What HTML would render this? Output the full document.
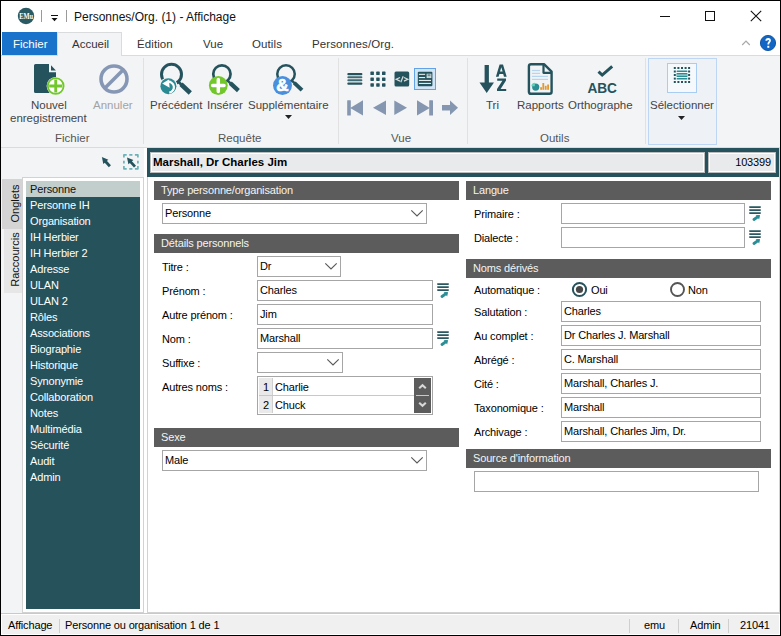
<!DOCTYPE html>
<html><head><meta charset="utf-8">
<style>
html,body{margin:0;padding:0}
body{width:781px;height:636px;position:relative;overflow:hidden;background:#fff;font-family:"Liberation Sans",sans-serif;color:#000}
.a{position:absolute}
.t{position:absolute;white-space:nowrap;font-size:11px;line-height:11px;letter-spacing:-0.15px}
.r{position:absolute;white-space:nowrap;font-size:11.5px;line-height:12px;color:#444}
.hd{position:absolute;background:#5b5c5b;height:19px;width:305px}
.hd span{position:absolute;left:7px;top:4px;color:#f4f4f4;font-size:11px;line-height:11px;white-space:nowrap;letter-spacing:-0.15px}
.in{position:absolute;box-sizing:border-box;border:1px solid #a6a6a6;background:#fff;height:21px}
.in span{position:absolute;left:2px;top:4px;font-size:11px;line-height:11px;white-space:nowrap;letter-spacing:-0.15px}
.lb{position:absolute;white-space:nowrap;font-size:11px;line-height:11px;letter-spacing:-0.15px}
.li{position:absolute;left:30px;color:#fff;font-size:11px;line-height:11px;white-space:nowrap;letter-spacing:-0.15px}
.sep{position:absolute;width:1px;background:#e1e1e1}
</style></head><body>
<!-- window border -->
<div class="a" style="left:0;top:0;width:781px;height:636px;box-sizing:border-box;border:1px solid #000"></div>

<!-- TITLE BAR -->
<svg class="a" style="left:17px;top:7px" width="18" height="18" viewBox="0 0 18 18"><circle cx="9" cy="9" r="8.2" fill="#2a5a63"/><text x="2.3" y="11.6" textLength="13.9" lengthAdjust="spacingAndGlyphs" font-family="Liberation Serif" font-weight="bold" font-size="7.6" fill="#fff">EMu</text></svg>
<div class="a" style="left:41px;top:10px;width:1px;height:12px;background:#9a9a9a"></div>
<svg class="a" style="left:50px;top:13px" width="9" height="9" viewBox="0 0 9 9"><rect x="1" y="2" width="7" height="1" fill="#111"/><path d="M1.5 5 L7.5 5 L4.5 8.2 Z" fill="#111"/></svg>
<div class="a" style="left:66px;top:10px;width:1px;height:12px;background:#9a9a9a"></div>
<div class="a" style="left:74px;top:11px;font-size:12px;line-height:12px;white-space:nowrap;color:#111">Personnes/Org. (1) - Affichage</div>
<div class="a" style="left:660px;top:16px;width:10px;height:1px;background:#111"></div>
<div class="a" style="left:705px;top:11px;width:10px;height:10px;box-sizing:border-box;border:1px solid #111"></div>
<svg class="a" style="left:750px;top:10px" width="12" height="12" viewBox="0 0 12 12"><path d="M0.8 0.8 L11.2 11.2 M11.2 0.8 L0.8 11.2" stroke="#111" stroke-width="1.1"/></svg>

<!-- TAB ROW -->
<div class="a" style="left:1px;top:55px;width:779px;height:1px;background:#dadbdc"></div>
<div class="a" style="left:2px;top:32px;width:55px;height:23px;background:#1a73ca"></div>
<div class="t" style="left:13px;top:39px;color:#fff;font-size:11.5px;letter-spacing:0">Fichier</div>
<div class="a" style="left:57px;top:32px;width:65px;height:24px;box-sizing:border-box;border:1px solid #dadbdc;border-bottom:none;background:#f3f4f6"></div>
<div class="t" style="left:72px;top:39px;color:#333;font-size:11.5px;letter-spacing:0">Accueil</div>
<div class="t" style="left:137px;top:39px;color:#333;font-size:11.5px;letter-spacing:0.1px">Édition</div>
<div class="t" style="left:203px;top:39px;color:#333;font-size:11.5px;letter-spacing:0.1px">Vue</div>
<div class="t" style="left:252px;top:39px;color:#333;font-size:11.5px;letter-spacing:0.1px">Outils</div>
<div class="t" style="left:312px;top:39px;color:#333;font-size:11.5px;letter-spacing:0.1px">Personnes/Org.</div>
<svg class="a" style="left:740px;top:39px" width="12" height="8" viewBox="0 0 12 8"><path d="M2.2 6 L6 2.2 L9.8 6" stroke="#a8a8a8" stroke-width="1.2" fill="none"/></svg>
<svg class="a" style="left:759px;top:34px" width="18" height="18" viewBox="0 0 18 18"><circle cx="9" cy="9" r="7.6" fill="#1267c6" stroke="#0b4f9c" stroke-width="0.9"/><path d="M7.3 6.8 Q7.3 5 9.2 5 Q11 5 11 6.6 Q11 7.6 10.1 8.3 Q9.3 9 9.3 10.6" stroke="#fff" stroke-width="1.8" fill="none"/><rect x="8.3" y="11.8" width="2" height="2" fill="#fff"/></svg>

<!-- RIBBON -->
<div class="a" style="left:1px;top:56px;width:779px;height:91px;background:#f3f4f6"></div>
<div class="a" style="left:1px;top:147px;width:779px;height:1px;background:#dadbdc"></div>
<div class="sep" style="left:143px;top:58px;height:86px"></div>
<div class="sep" style="left:338px;top:58px;height:86px"></div>
<div class="sep" style="left:467px;top:58px;height:86px"></div>
<div class="sep" style="left:645px;top:58px;height:86px"></div>

<!-- Fichier group -->
<svg class="a" style="left:30px;top:60px" width="40" height="40" viewBox="0 0 40 40">
 <path d="M5.5 4 H19 V12.2 H26 V31.4 Q26 32.9 24.5 32.9 H5.5 Q4 32.9 4 31.4 V5.5 Q4 4 5.5 4 Z" fill="#25535d"/>
 <path d="M21 5.3 V10.4 H25.9 Z" fill="#25535d"/>
 <circle cx="25.7" cy="26" r="9.1" fill="#fff"/>
 <circle cx="25.7" cy="26" r="7.9" fill="#fff" stroke="#72c72b" stroke-width="1.9"/>
 <path d="M19.2 26 H32.2 M25.7 19.5 V32.5" stroke="#72c72b" stroke-width="2.8"/>
</svg>
<div class="r" style="left:31px;top:99px">Nouvel</div>
<div class="r" style="left:10px;top:112px">enregistrement</div>
<svg class="a" style="left:97px;top:62px" width="34" height="34" viewBox="0 0 34 34"><circle cx="17" cy="17" r="13" fill="none" stroke="#8597b4" stroke-width="3.6"/><path d="M8 26 L26 8" stroke="#8597b4" stroke-width="3.6"/></svg>
<div class="r" style="left:93px;top:99px;color:#a3a3a3">Annuler</div>
<div class="r" style="left:55px;top:132px;color:#555">Fichier</div>

<!-- Requête group -->
<svg class="a" style="left:150px;top:58px" width="50" height="42" viewBox="0 0 50 42">
 <circle cx="21.5" cy="16.3" r="10" fill="none" stroke="#25535d" stroke-width="3"/>
 <path d="M27.6 23 L31.5 26.8" stroke="#25535d" stroke-width="2.8"/>
 <path d="M31 26.3 L40.3 35" stroke="#25535d" stroke-width="4.6"/>
 <circle cx="18.4" cy="28.2" r="9" fill="#f3f4f6"/>
 <circle cx="18.4" cy="28.2" r="8" fill="#2a8a94"/>
 <path d="M17.6 23.8 A4.9 4.9 0 0 1 19.3 34.6" stroke="#fff" stroke-width="2.2" fill="none"/>
 <path d="M12.2 25.5 L19 21.6 L19.6 29.8 Z" fill="#fff"/>
</svg>
<div class="r" style="left:150px;top:99px">Précédent</div>
<svg class="a" style="left:200px;top:58px" width="45" height="42" viewBox="0 0 45 42">
 <circle cx="21.9" cy="16" r="8.65" fill="none" stroke="#25535d" stroke-width="2.7"/>
 <path d="M27.3 22.3 L30.8 25.6" stroke="#25535d" stroke-width="2.5"/>
 <path d="M30.3 25.1 L38.4 32.6" stroke="#25535d" stroke-width="4.2"/>
 <circle cx="18.3" cy="27.5" r="9.4" fill="#72c72b"/>
 <path d="M12.6 27.5 H24 M18.3 21.4 V33.6" stroke="#fff" stroke-width="3.5" stroke-linecap="round"/>
</svg>
<div class="r" style="left:207px;top:99px">Insérer</div>
<svg class="a" style="left:265px;top:58px" width="45" height="42" viewBox="0 0 45 42">
 <circle cx="21" cy="16" r="8.75" fill="none" stroke="#25535d" stroke-width="2.5"/>
 <path d="M26.5 22.3 L29.8 25.4" stroke="#25535d" stroke-width="2.4"/>
 <path d="M29.3 24.9 L37 32.1" stroke="#25535d" stroke-width="4"/>
 <circle cx="17.5" cy="27.5" r="9.5" fill="#4a8fdc"/>
 <text x="17.3" y="33.4" text-anchor="middle" font-family="Liberation Sans" font-weight="bold" font-size="17" fill="#fff" stroke="#fff" stroke-width="0.7">&amp;</text>
</svg>
<div class="r" style="left:248px;top:99px">Supplémentaire</div>
<svg class="a" style="left:285px;top:115px" width="7" height="5" viewBox="0 0 7 5"><path d="M0 0 H7 L3.5 4 Z" fill="#222"/></svg>
<div class="r" style="left:218px;top:132px;color:#555">Requête</div>

<!-- Vue group -->
<svg class="a" style="left:345px;top:68px" width="120" height="52" viewBox="0 0 120 52">
 <g fill="#25535d">
  <rect x="2.3" y="5" width="15.1" height="2.2" rx="1"/><rect x="2.3" y="8.3" width="15.1" height="2" rx="1" fill="#3d6a73"/><rect x="2.3" y="11.2" width="15.1" height="2" rx="1" fill="#3d6a73"/><rect x="2.3" y="14.5" width="15.1" height="2.3" rx="1"/>
  <rect x="25.4" y="3.6" width="3.5" height="3.5" rx="0.6"/><rect x="31.2" y="3.6" width="3.5" height="3.5" rx="0.6"/><rect x="37" y="3.6" width="3.5" height="3.5" rx="0.6"/><rect x="25.4" y="9.4" width="3.5" height="3.5" rx="0.6"/><rect x="31.2" y="9.4" width="3.5" height="3.5" rx="0.6"/><rect x="37" y="9.4" width="3.5" height="3.5" rx="0.6"/><rect x="25.4" y="15.2" width="3.5" height="3.5" rx="0.6"/><rect x="31.2" y="15.2" width="3.5" height="3.5" rx="0.6"/><rect x="37" y="15.2" width="3.5" height="3.5" rx="0.6"/>
  <rect x="49.5" y="3.4" width="14.7" height="15.1" rx="1.5"/>
 </g>
 <path d="M55 9.5 L51.2 11.3 L55 13.1 M58.2 8.2 L55.8 14.3 M59 9.5 L62.8 11.3 L59 13.1" stroke="#d5dcdc" stroke-width="1.25" fill="none"/>
 <rect x="69.5" y="0.5" width="21" height="21" fill="#d2e4f8" stroke="#62a2e6" stroke-width="1"/>
 <rect x="72.8" y="3.8" width="14.6" height="14.4" rx="1" fill="#25535d"/>
 <g fill="#e4eaec"><rect x="73.9" y="5.8" width="6.2" height="1.1"/><rect x="73.9" y="9" width="6.2" height="1.1"/><rect x="73.9" y="11.9" width="12.1" height="1.1"/><rect x="73.9" y="14.9" width="12.1" height="1.1"/></g>
 <rect x="82" y="6.1" width="4" height="3.6" fill="#b9c8cb" stroke="#dfe6e8" stroke-width="0.7"/><rect x="82.6" y="6.6" width="2.8" height="0.9" fill="#25535d"/>
 <g fill="#8596b0">
  <rect x="2.2" y="32.2" width="3.6" height="15.4" rx="0.5"/><path d="M5.2 39.9 L18 32.2 V47.6 Z"/>
  <path d="M28 39.8 L41 32.5 V47 Z"/>
  <path d="M49.3 32.5 L62 39.8 L49.3 47 Z"/>
  <path d="M72 32.2 L84.8 39.9 L72 47.6 Z"/><rect x="84.2" y="32.2" width="3.8" height="15.4" rx="0.5"/>
  <path d="M97 37 H105 V32.5 L113 39.8 L105 47 V42.5 H97 Z"/>
 </g>
</svg>
<div class="r" style="left:391px;top:132px;color:#555">Vue</div>

<!-- Outils group -->
<svg class="a" style="left:475px;top:60px" width="40" height="38" viewBox="0 0 40 38">
 <path d="M9.6 5 H13.9 V22.4 H19 L11.7 33 L4.5 22.4 H9.6 Z" fill="#25535d"/>
 <path fill-rule="evenodd" d="M20.9 16.7 L24.6 4.5 H28 L31.7 16.7 H29 L28.2 13.9 H24.4 L23.6 16.7 Z M25 11.6 H27.6 L26.3 7.2 Z" fill="#25535d"/>
 <path d="M22.2 18.5 H31 V20.6 L25.6 28.9 H31.2 V31.1 H22 V29 L27.4 20.7 H22.2 Z" fill="#25535d"/>
</svg>
<div class="r" style="left:486px;top:99px">Tri</div>
<svg class="a" style="left:525px;top:60px" width="32" height="38" viewBox="0 0 32 38">
 <path d="M6 4.2 H19 L26.6 11.6 V31.8 Q26.6 33.8 24.6 33.8 H5.9 Q3.9 33.8 3.9 31.8 V6.2 Q3.9 4.2 6 4.2 Z" fill="#f1f3f5" stroke="#25535d" stroke-width="2.4" stroke-linejoin="round"/>
 <path d="M18.5 4.5 V12.8 H26.3" fill="none" stroke="#25535d" stroke-width="2.2" stroke-linejoin="round"/>
 <g fill="#b5d6ee"><rect x="6.9" y="9.9" width="8.1" height="1.2"/><rect x="6.9" y="12.8" width="8.1" height="1.2"/><rect x="6.9" y="15.8" width="16.1" height="1.2"/><rect x="6.9" y="18.8" width="16.1" height="1.2"/></g>
 <circle cx="10.7" cy="27.1" r="3.6" fill="#2a8e94"/>
 <path d="M9.9 26.2 V22.7 A3.5 3.5 0 0 0 6.4 26.2 Z" fill="#62d2b6"/>
 <g fill="#e3992e"><rect x="15.2" y="27.2" width="1.8" height="2.6"/><rect x="17.4" y="23" width="1.8" height="6.8"/><rect x="19.8" y="25.8" width="1.8" height="4"/><rect x="22.2" y="24.5" width="1.8" height="5.3"/></g>
</svg>
<div class="r" style="left:517px;top:99px">Rapports</div>
<svg class="a" style="left:585px;top:60px" width="36" height="38" viewBox="0 0 36 38">
 <path d="M13.5 11.6 L17.2 15.1 L27.2 6.4" fill="none" stroke="#25535d" stroke-width="3"/>
 <text x="2.4" y="32.5" textLength="29.6" lengthAdjust="spacingAndGlyphs" font-family="Liberation Sans" font-weight="bold" font-size="14.8" fill="#25535d">ABC</text>
</svg>
<div class="r" style="left:568px;top:99px">Orthographe</div>
<div class="r" style="left:540px;top:132px;color:#555">Outils</div>

<!-- Sélectionner -->
<div class="a" style="left:648px;top:58px;width:69px;height:87px;box-sizing:border-box;border:1px solid #bcd6f3;background:#eef2f7"></div>
<div class="a" style="left:667px;top:63px;width:30px;height:30px;box-sizing:border-box;border:1px solid #a9cdf2;background:#f6f9fc"></div>
<svg class="a" style="left:672px;top:66px" width="20" height="20" viewBox="0 0 20 20">
 <g fill="#25535d"><rect x="1.8" y="1.0" width="2" height="2"/><rect x="1.8" y="15.0" width="2" height="2"/><rect x="5.4" y="1.0" width="2" height="2"/><rect x="5.4" y="15.0" width="2" height="2"/><rect x="9.0" y="1.0" width="2" height="2"/><rect x="9.0" y="15.0" width="2" height="2"/><rect x="12.6" y="1.0" width="2" height="2"/><rect x="12.6" y="15.0" width="2" height="2"/><rect x="16.1" y="1.0" width="2" height="2"/><rect x="16.1" y="15.0" width="2" height="2"/><rect x="1.8" y="4.5" width="2" height="2"/><rect x="16.1" y="4.5" width="2" height="2"/><rect x="1.8" y="8.0" width="2" height="2"/><rect x="16.1" y="8.0" width="2" height="2"/><rect x="1.8" y="11.6" width="2" height="2"/><rect x="16.1" y="11.6" width="2" height="2"/></g>
 <rect x="4.6" y="4.6" width="10.8" height="1.5" rx="0.6" fill="#2a8e94"/>
 <rect x="4.6" y="7" width="10.8" height="4" rx="0.6" fill="#2a8e94"/>
 <rect x="4.8" y="8.2" width="10.4" height="1.7" fill="#8cc4c6"/>
 <rect x="4.6" y="12.1" width="10.8" height="1.4" rx="0.6" fill="#2a8e94"/>
</svg>
<div class="r" style="left:650px;top:99px">Sélectionner</div>
<svg class="a" style="left:678px;top:116px" width="7" height="5" viewBox="0 0 7 5"><path d="M0 0 H7 L3.5 4 Z" fill="#222"/></svg>

<!-- SIDEBAR -->
<div class="a" style="left:1px;top:148px;width:143px;height:465px;background:#f3f4f6"></div>
<svg class="a" style="left:100px;top:155px" width="14" height="14" viewBox="0 0 14 14"><path d="M1.9 2.1 L8.3 4.8 L3.3 9 Z" fill="#25535d"/><path d="M5.3 6.3 L9.9 11.3" stroke="#25535d" stroke-width="2.8"/></svg>
<svg class="a" style="left:122px;top:153px" width="18" height="18" viewBox="0 0 18 18"><path d="M1.9 4.6 V1.9 H4.7 M7.3 1.9 H10.4 M12.9 1.9 H15.9 V4.6 M1.9 7.7 V10.5 M15.9 7.7 V10.5 M1.9 13.1 V15.8 H4.7 M7.3 15.8 H10.4 M12.9 15.8 H15.9 V13.1" fill="none" stroke="#6cb2b8" stroke-width="1.7" stroke-linejoin="round"/><path d="M5 4.4 L11.4 7.1 L6.4 11.3 Z" fill="#25535d"/><path d="M8.4 8.6 L13 13.6" stroke="#25535d" stroke-width="2.8"/></svg>
<div class="a" style="left:22px;top:177px;width:122px;height:436px;box-sizing:border-box;border:1px solid #d2d2d2;background:#fff"></div>
<div class="a" style="left:2px;top:179px;width:20px;height:50px;background:#d4d4d4"></div>
<div class="a" style="left:4px;top:229px;width:18px;height:64px;background:#e6e6e6"></div>
<div class="a" style="left:-10px;top:198px;width:50px;height:11px;transform:rotate(-90deg);font-size:11px;line-height:11px;text-align:center;color:#111">Onglets</div>
<div class="a" style="left:-17px;top:254px;width:64px;height:11px;transform:rotate(-90deg);font-size:11px;line-height:11px;text-align:center;color:#111">Raccourcis</div>
<div class="a" style="left:26px;top:181px;width:114px;height:428px;background:#26525c"></div>
<div class="a" style="left:26px;top:181px;width:114px;height:16px;background:#c2cecb"></div>
<div class="li" style="top:184px;color:#111">Personne</div>
<div class="li" style="top:200px">Personne IH</div>
<div class="li" style="top:216px">Organisation</div>
<div class="li" style="top:232px">IH Herbier</div>
<div class="li" style="top:248px">IH Herbier 2</div>
<div class="li" style="top:264px">Adresse</div>
<div class="li" style="top:280px">ULAN</div>
<div class="li" style="top:296px">ULAN 2</div>
<div class="li" style="top:312px">Rôles</div>
<div class="li" style="top:328px">Associations</div>
<div class="li" style="top:344px">Biographie</div>
<div class="li" style="top:360px">Historique</div>
<div class="li" style="top:376px">Synonymie</div>
<div class="li" style="top:392px">Collaboration</div>
<div class="li" style="top:408px">Notes</div>
<div class="li" style="top:424px">Multimédia</div>
<div class="li" style="top:440px">Sécurité</div>
<div class="li" style="top:456px">Audit</div>
<div class="li" style="top:472px">Admin</div>

<!-- CONTENT -->
<div class="a" style="left:147px;top:148px;width:633px;height:465px;box-sizing:border-box;border:1px solid #d2d2d2;border-top:none;background:#fff"></div>
<div class="a" style="left:147px;top:148px;width:632px;height:29px;background:#25525c"></div>
<div class="a" style="left:150px;top:152px;width:555px;height:21px;box-sizing:border-box;border:1px solid #b9bdbe;box-shadow:inset 0 0 0 1px #fff;background:#e9eaec"></div>
<div class="a" style="left:708px;top:152px;width:68px;height:21px;box-sizing:border-box;border:1px solid #b9bdbe;box-shadow:inset 0 0 0 1px #fff;background:#e9eaec"></div>
<div class="a" style="left:153px;top:156px;font-weight:bold;font-size:11.5px;line-height:12px;white-space:nowrap;color:#000">Marshall, Dr Charles Jim</div>
<div class="t" style="left:735px;top:157px;width:36px;text-align:right">103399</div>

<!-- left column -->
<div class="hd" style="left:154px;top:181px"><span>Type personne/organisation</span></div>
<div class="in" style="left:162px;top:203px;width:265px"><span>Personne</span></div>
<div class="hd" style="left:154px;top:234px"><span>Détails personnels</span></div>
<div class="lb" style="left:162px;top:262px">Titre :</div>
<div class="lb" style="left:162px;top:286px">Prénom :</div>
<div class="lb" style="left:162px;top:310px">Autre prénom :</div>
<div class="lb" style="left:162px;top:334px">Nom :</div>
<div class="lb" style="left:162px;top:358px">Suffixe :</div>
<div class="lb" style="left:162px;top:382px">Autres noms :</div>
<div class="in" style="left:257px;top:256px;width:84px"><span>Dr</span></div>
<div class="in" style="left:257px;top:280px;width:176px"><span>Charles</span></div>
<div class="in" style="left:257px;top:304px;width:176px"><span>Jim</span></div>
<div class="in" style="left:257px;top:328px;width:176px"><span>Marshall</span></div>
<div class="in" style="left:257px;top:352px;width:86px"></div>
<div class="a" style="left:257px;top:376px;width:176px;height:39px;box-sizing:border-box;border:1px solid #a6a6a6;background:#fff"></div>
<div class="a" style="left:259px;top:378px;width:13px;height:35px;background:#e9e9e9;border-right:1px solid #cfcfcf"></div>
<div class="a" style="left:259px;top:395px;width:155px;height:1px;background:#c8c8c8"></div>
<div class="t" style="left:263px;top:382px">1</div>
<div class="t" style="left:275px;top:382px">Charlie</div>
<div class="t" style="left:263px;top:400px">2</div>
<div class="t" style="left:275px;top:400px">Chuck</div>
<div class="a" style="left:414px;top:378px;width:17px;height:35px;background:#5b5c5b"></div>
<div class="a" style="left:416px;top:395px;width:13px;height:1px;background:#c8c8c8"></div>
<svg class="a" style="left:418px;top:381px" width="9" height="30" viewBox="0 0 9 30"><path d="M1.2 7.2 L4.5 4.2 L7.8 7.2" stroke="#d8d8d8" stroke-width="2.1" fill="none"/><path d="M1.2 21.8 L4.5 24.8 L7.8 21.8" stroke="#d8d8d8" stroke-width="2.1" fill="none"/></svg>

<div class="hd" style="left:154px;top:428px"><span>Sexe</span></div>
<div class="in" style="left:162px;top:450px;width:265px"><span>Male</span></div>

<!-- right column -->
<div class="hd" style="left:466px;top:181px"><span>Langue</span></div>
<div class="lb" style="left:474px;top:209px">Primaire :</div>
<div class="lb" style="left:474px;top:233px">Dialecte :</div>
<div class="in" style="left:561px;top:203px;width:184px"></div>
<div class="in" style="left:561px;top:227px;width:184px"></div>
<div class="hd" style="left:466px;top:259px"><span>Noms dérivés</span></div>
<div class="lb" style="left:474px;top:285px">Automatique :</div>
<svg class="a" style="left:571px;top:281px" width="17" height="17" viewBox="0 0 17 17"><circle cx="8.5" cy="8.5" r="6.6" fill="#fff" stroke="#25525c" stroke-width="2"/><circle cx="8.5" cy="8.5" r="3.6" fill="#474747"/></svg>
<div class="t" style="left:591px;top:285px">Oui</div>
<svg class="a" style="left:669px;top:281px" width="17" height="17" viewBox="0 0 17 17"><circle cx="8.5" cy="8.5" r="6.5" fill="#fff" stroke="#555" stroke-width="1.9"/></svg>
<div class="t" style="left:688px;top:285px">Non</div>
<div class="lb" style="left:474px;top:307px">Salutation :</div>
<div class="lb" style="left:474px;top:331px">Au complet :</div>
<div class="lb" style="left:474px;top:355px">Abrégé :</div>
<div class="lb" style="left:474px;top:379px">Cité :</div>
<div class="lb" style="left:474px;top:403px">Taxonomique :</div>
<div class="lb" style="left:474px;top:427px">Archivage :</div>
<div class="in" style="left:561px;top:301px;width:200px"><span>Charles</span></div>
<div class="in" style="left:561px;top:325px;width:200px"><span>Dr Charles J. Marshall</span></div>
<div class="in" style="left:561px;top:349px;width:200px"><span>C. Marshall</span></div>
<div class="in" style="left:561px;top:373px;width:200px"><span>Marshall, Charles J.</span></div>
<div class="in" style="left:561px;top:397px;width:200px"><span>Marshall</span></div>
<div class="in" style="left:561px;top:421px;width:200px"><span>Marshall, Charles Jim, Dr.</span></div>
<div class="hd" style="left:466px;top:449px"><span>Source d'information</span></div>
<div class="in" style="left:474px;top:471px;width:285px"></div>


<!-- chevrons -->
<svg class="a" style="left:406px;top:209px" width="18" height="9" viewBox="0 0 18 9"><path d="M5.3 1.3 L11 7 L16.7 1.3" stroke="#5a5a5a" stroke-width="1.15" fill="none"/></svg>
<svg class="a" style="left:406px;top:456px" width="18" height="9" viewBox="0 0 18 9"><path d="M5.3 1.3 L11 7 L16.7 1.3" stroke="#5a5a5a" stroke-width="1.15" fill="none"/></svg>
<svg class="a" style="left:324px;top:262px" width="15" height="9" viewBox="0 0 15 9"><path d="M1.3 1.3 L7 7 L12.7 1.3" stroke="#5a5a5a" stroke-width="1.15" fill="none"/></svg>
<svg class="a" style="left:326px;top:358px" width="15" height="9" viewBox="0 0 15 9"><path d="M1.3 1.3 L7 7 L12.7 1.3" stroke="#5a5a5a" stroke-width="1.15" fill="none"/></svg>
<!-- list icons -->
<svg class="a" style="left:436px;top:282px" width="14" height="16" viewBox="0 0 14 16"><g fill="#2a5760"><rect x="1" y="1.15" width="12" height="1.75" rx="0.8"/><rect x="1" y="4.15" width="12" height="1.75" rx="0.8"/><rect x="1" y="7.15" width="12" height="1.75" rx="0.8"/></g><path d="M6 14.5 L10 11.6" stroke="#2a8e96" stroke-width="2.8" stroke-linecap="round"/><path d="M7.6 10.3 L12 10.1 L11.2 14.4 Z" fill="#2a8e96"/></svg>
<svg class="a" style="left:436px;top:330px" width="14" height="16" viewBox="0 0 14 16"><g fill="#2a5760"><rect x="1" y="1.15" width="12" height="1.75" rx="0.8"/><rect x="1" y="4.15" width="12" height="1.75" rx="0.8"/><rect x="1" y="7.15" width="12" height="1.75" rx="0.8"/></g><path d="M6 14.5 L10 11.6" stroke="#2a8e96" stroke-width="2.8" stroke-linecap="round"/><path d="M7.6 10.3 L12 10.1 L11.2 14.4 Z" fill="#2a8e96"/></svg>
<svg class="a" style="left:748px;top:205px" width="14" height="16" viewBox="0 0 14 16"><g fill="#2a5760"><rect x="1" y="1.15" width="12" height="1.75" rx="0.8"/><rect x="1" y="4.15" width="12" height="1.75" rx="0.8"/><rect x="1" y="7.15" width="12" height="1.75" rx="0.8"/></g><path d="M6 14.5 L10 11.6" stroke="#2a8e96" stroke-width="2.8" stroke-linecap="round"/><path d="M7.6 10.3 L12 10.1 L11.2 14.4 Z" fill="#2a8e96"/></svg>
<svg class="a" style="left:748px;top:229px" width="14" height="16" viewBox="0 0 14 16"><g fill="#2a5760"><rect x="1" y="1.15" width="12" height="1.75" rx="0.8"/><rect x="1" y="4.15" width="12" height="1.75" rx="0.8"/><rect x="1" y="7.15" width="12" height="1.75" rx="0.8"/></g><path d="M6 14.5 L10 11.6" stroke="#2a8e96" stroke-width="2.8" stroke-linecap="round"/><path d="M7.6 10.3 L12 10.1 L11.2 14.4 Z" fill="#2a8e96"/></svg>
<!-- STATUS BAR -->
<div class="a" style="left:1px;top:613px;width:779px;height:1px;background:#c9c9c9"></div>
<div class="a" style="left:2px;top:615px;width:777px;height:19px;background:#f0f0f0"></div>
<div class="t" style="left:8px;top:620px">Affichage</div>
<div class="a" style="left:59px;top:619px;width:1px;height:14px;background:#cfcfcf"></div>
<div class="t" style="left:65px;top:620px">Personne ou organisation 1 de 1</div>
<div class="a" style="left:629px;top:619px;width:1px;height:14px;background:#cfcfcf"></div>
<div class="t" style="left:644px;top:620px">emu</div>
<div class="a" style="left:678px;top:619px;width:1px;height:14px;background:#cfcfcf"></div>
<div class="t" style="left:690px;top:620px">Admin</div>
<div class="a" style="left:728px;top:619px;width:1px;height:14px;background:#cfcfcf"></div>
<div class="t" style="left:740px;top:620px">21041</div>
</body></html>
